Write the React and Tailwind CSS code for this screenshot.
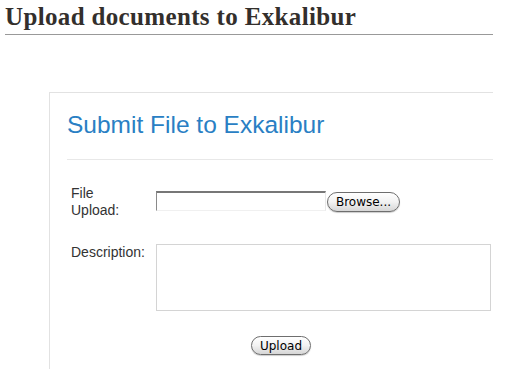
import React from 'react';

const btn =
  'rounded-full border border-[#6e6e6e] bg-gradient-to-b from-white via-[#f2f2f2] to-[#d6d6d6] text-[12px] leading-none text-black shadow-[0_1px_1px_rgba(0,0,0,0.2)] font-["DejaVu_Sans",sans-serif]';

const App = () => {
  return (
    <div className="w-[505px] h-[369px] overflow-hidden bg-white font-['Liberation_Sans',Arial,sans-serif]">
      <div className="ml-[5px] w-[488px]">
        <h1 className="pt-[2px] pb-[3px] text-[25px] leading-[29px] font-bold text-[#332f2c] border-b border-[#999] font-['Liberation_Serif',serif] tracking-[0.35px]">
          Upload documents to Exkalibur
        </h1>

        <div className="ml-[44px] mt-[57px] pb-[40px] border-l border-t border-[#e2e2e2] pl-[17px]">
          <h2 className="pt-[18px] text-[24.5px] leading-[28px] text-[#2a7fc4]">
            Submit File to Exkalibur
          </h2>
          <div className="mt-[20px] border-b border-[#e8e8e8]" />

          <form className="pt-[25px]" onSubmit={(e) => e.preventDefault()}>
            <div className="flex">
              <label className="w-[89px] pl-[4px] text-[14px] leading-[17px] text-[#333]">
                File
                <br />
                Upload:
              </label>
              <div className="mt-[6px] flex items-start">
                <div className="w-[170px] h-[20px] border-t-2 border-l border-r border-b border-t-[#777] border-l-[#8a8a8a] border-r-[#e8e8e8] border-b-[#f0f0f0] bg-white" />
                <button type="button" className={`${btn} ml-[1px] mt-[1px] w-[73px] h-[20px]`}>
                  Browse...
                </button>
              </div>
            </div>

            <div className="flex mt-[25px]">
              <label className="w-[89px] pl-[4px] text-[14px] leading-[17px] text-[#333]">
                Description:
              </label>
              <textarea className="w-[335px] h-[67px] border border-[#d4d4d4] resize-none outline-none" />
            </div>

            <div className="flex justify-center pt-[25px] pl-[2px]">
              <button type="submit" className={`${btn} w-[60px] h-[19px]`}>
                Upload
              </button>
            </div>
          </form>
        </div>
      </div>
    </div>
  );
};

export default App;
